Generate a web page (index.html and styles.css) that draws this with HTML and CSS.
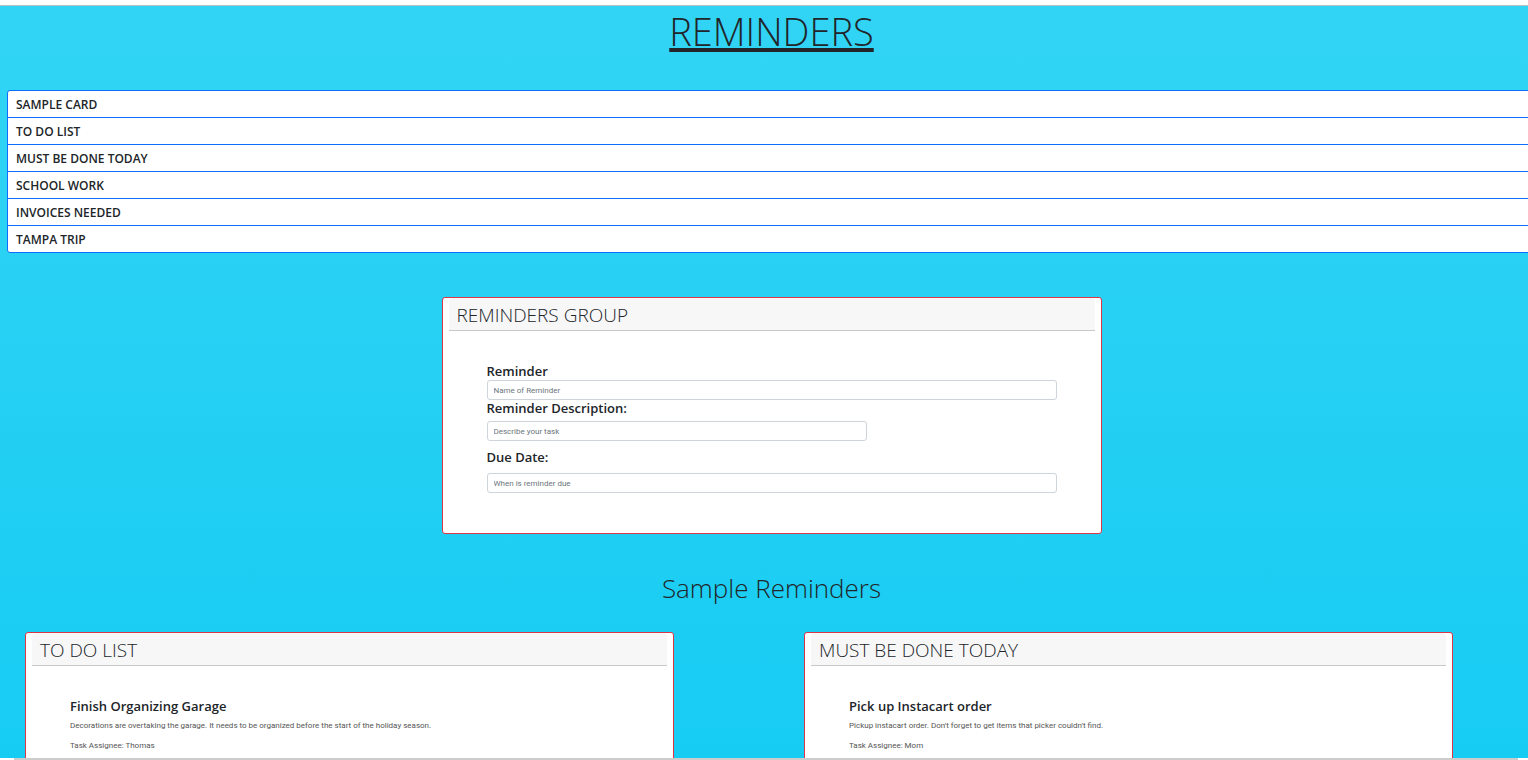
FILE: index.html
```html
<!DOCTYPE html>
<html lang="en">
<head>
<meta charset="utf-8">
<title>Reminders</title>
<link rel="stylesheet" href="styles.css">
</head>
<body>
<main class="page">
  <div class="content">
    <h1 class="page-title">REMINDERS</h1>
    <ul class="list-group">
      <li>SAMPLE CARD</li>
      <li>TO DO LIST</li>
      <li>MUST BE DONE TODAY</li>
      <li>SCHOOL WORK</li>
      <li>INVOICES NEEDED</li>
      <li>TAMPA TRIP</li>
    </ul>
    <section class="card form-card">
      <h2 class="card-header">REMINDERS GROUP</h2>
      <form class="reminder-form">
        <label for="name">Reminder</label>
        <input id="name" type="text" placeholder="Name of Reminder">
        <label for="description">Reminder Description:</label>
        <input id="description" class="short spaced" type="text" placeholder="Describe your task">
        <label for="due" class="due-label">Due Date:</label>
        <input id="due" class="due" type="text" placeholder="When is reminder due">
      </form>
    </section>
    <h2 class="section-title">Sample Reminders</h2>
    <div class="samples">
      <section class="card">
        <h2 class="card-header">TO DO LIST</h2>
        <div class="card-body">
          <h3>Finish Organizing Garage</h3>
          <p>Decorations are overtaking the garage. It needs to be organized before the start of the holiday season.</p>
          <p>Task Assignee: Thomas</p>
        </div>
      </section>
      <section class="card">
        <h2 class="card-header">MUST BE DONE TODAY</h2>
        <div class="card-body">
          <h3>Pick up Instacart order</h3>
          <p>Pickup instacart order. Don't forget to get items that picker couldn't find.</p>
          <p>Task Assignee: Mom</p>
        </div>
      </section>
    </div>
  </div>
</main>
<div class="bottom-edge"></div>
</body>
</html>
```
FILE: styles.css
```css
* { box-sizing: border-box; }

body {
  display: flex;
  flex-direction: column;
  height: 100vh;
  margin: 0;
  padding-top: 5px;
  overflow: hidden;
  background: #fff;
  color: #212529;
  font-family: "Open Sans", "Noto Sans", sans-serif;
}

h1, h2, h3, p, ul { margin: 0; padding: 0; }

.page {
  flex: 1;
  min-height: 0;
  overflow: hidden;
  border-top: 1px solid #b5c3c9;
  background: linear-gradient(#32d4f4, #17ccf3);
}

.content { margin: 0 -8px 0 7px; }

.page-title {
  padding-top: 1px;
  font-size: 38px;
  font-weight: 300;
  line-height: 48px;
  text-align: center;
  text-decoration: underline;
  text-decoration-thickness: 4px;
  text-underline-offset: 2px;
}

.list-group {
  margin-top: 35px;
  overflow: hidden;
  border: 1px solid #0d6efd;
  border-radius: 3px;
  background: #fff;
  list-style: none;
}

.list-group li {
  padding: 2px 8px 0;
  font-size: 12px;
  font-weight: 600;
  line-height: 24px;
}

.list-group li + li { border-top: 1px solid #0d6efd; }

.card {
  padding: 0 6px;
  border: 1px solid #dc3545;
  border-radius: 3px;
  background: #fff;
}

.card-header {
  padding: 2px 8px 0;
  border-bottom: 1px solid #c8c8c8;
  border-radius: 3px 3px 0 0;
  background: #f7f7f7;
  font-size: 19px;
  font-weight: 300;
  line-height: 30px;
}

.form-card {
  width: 660px;
  margin: 44px auto 0;
}

.reminder-form {
  display: flex;
  flex-direction: column;
  padding: 32px 38px 40px;
}

.reminder-form label {
  font-size: 13px;
  font-weight: 600;
  line-height: 17px;
}

.reminder-form input {
  width: 100%;
  height: 20px;
  padding: 0 6px;
  border: 1px solid #ced4da;
  border-radius: 3px;
  background: #fff;
  color: #212529;
  font: 8px Roboto, "Noto Sans", sans-serif;
}

.reminder-form input::placeholder { color: #6c757d; opacity: 1; }
.reminder-form .short { width: 380px; max-width: 100%; }
.reminder-form .spaced { margin-top: 4px; }
.reminder-form .due-label { margin-top: 8px; }
.reminder-form .due { margin-top: 7px; }

.section-title {
  margin-top: 34px;
  font-size: 26px;
  font-weight: 300;
  line-height: 40px;
  text-align: center;
}

.samples {
  display: grid;
  grid-template-columns: 1fr 1fr;
  gap: 130px;
  margin-top: 24px;
  padding: 0 83px 0 18px;
}

.card-body { padding: 32px 38px 40px; }

.card-body h3 {
  margin-bottom: 3px;
  font-size: 13px;
  font-weight: 600;
  line-height: 17px;
}

.card-body p {
  margin-bottom: 4px;
  color: #555;
  font-family: Roboto, "Noto Sans", sans-serif;
  font-size: 8px;
  line-height: 16px;
}

.bottom-edge {
  height: 2px;
  margin: 0 10px 0 14px;
  background: #ccc;
}
```
